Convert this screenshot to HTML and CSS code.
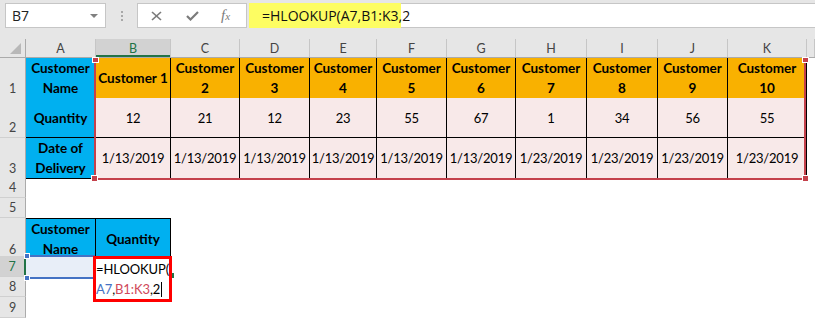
FILE: index.html
```html
<!DOCTYPE html>
<html lang="en">
<head>
  <meta charset="UTF-8" />
  <title>HLOOKUP example</title>
  <link rel="stylesheet" href="styles.css">
</head>
<body>
  <div class="toolbar">
    <div class="namebox"><span>B7</span><span class="caret"></span></div>
    <div class="grip"><i></i></div>
    <div class="fxbox">
      <svg class="ico-x" width="11" height="10" viewBox="0 0 11 10">
        <line x1="1" y1="1" x2="10" y2="9" />
        <line x1="10" y1="1" x2="1" y2="9" />
      </svg>
      <svg class="ico-ok" width="13" height="10" viewBox="0 0 13 10">
        <polyline points="1,5 4.5,8.5 12,1" />
      </svg>
      <span class="ico-fx">f<small>x</small></span>
    </div>
    <div class="formula"><span class="hl">=HLOOKUP(A7,B1:K3,2</span></div>
  </div>

  <div class="sheet">
    <div class="row hdr">
      <div class="corner"><i class="tri"></i></div>
      <div class="col">A</div>
      <div class="col on">B</div>
      <div class="col">C</div>
      <div class="col">D</div>
      <div class="col">E</div>
      <div class="col">F</div>
      <div class="col">G</div>
      <div class="col">H</div>
      <div class="col">I</div>
      <div class="col">J</div>
      <div class="col">K</div>
      <div class="col"></div>
    </div>

    <div class="row h40">
      <div class="rh">1</div>
      <div class="c b blue">Customer<br>Name</div>
      <div class="c b gold">Customer 1</div>
      <div class="c b gold">Customer<br>2</div>
      <div class="c b gold">Customer<br>3</div>
      <div class="c b gold">Customer<br>4</div>
      <div class="c b gold">Customer<br>5</div>
      <div class="c b gold">Customer<br>6</div>
      <div class="c b gold">Customer<br>7</div>
      <div class="c b gold">Customer<br>8</div>
      <div class="c b gold">Customer<br>9</div>
      <div class="c b gold">Customer<br>10</div>
    </div>

    <div class="row h40">
      <div class="rh">2</div>
      <div class="c b blue">Quantity</div>
      <div class="c b pink">12</div>
      <div class="c b pink">21</div>
      <div class="c b pink">12</div>
      <div class="c b pink">23</div>
      <div class="c b pink">55</div>
      <div class="c b pink">67</div>
      <div class="c b pink">1</div>
      <div class="c b pink">34</div>
      <div class="c b pink">56</div>
      <div class="c b pink">55</div>
    </div>

    <div class="row h40">
      <div class="rh">3</div>
      <div class="c b blue">Date of<br>Delivery</div>
      <div class="c b pink">1/13/2019</div>
      <div class="c b pink">1/13/2019</div>
      <div class="c b pink">1/13/2019</div>
      <div class="c b pink">1/13/2019</div>
      <div class="c b pink">1/13/2019</div>
      <div class="c b pink">1/13/2019</div>
      <div class="c b pink">1/23/2019</div>
      <div class="c b pink">1/23/2019</div>
      <div class="c b pink">1/23/2019</div>
      <div class="c b pink">1/23/2019</div>
    </div>

    <div class="row h20"><div class="rh">4</div></div>
    <div class="row h20"><div class="rh">5</div></div>

    <div class="row h38">
      <div class="rh">6</div>
      <div class="c b bt blue">Customer<br>Name</div>
      <div class="c b bt blue">Quantity</div>
    </div>

    <div class="row h21">
      <div class="rh on">7</div>
      <div class="c a7"></div>
    </div>
    <div class="row h20"><div class="rh">8</div></div>
    <div class="row h21"><div class="rh">9</div></div>

    <!-- reference highlight for B1:K3 -->
    <div class="ref-red"></div>
    <span class="hd red tl"></span>
    <span class="hd red tr"></span>
    <span class="hd red bl"></span>
    <span class="hd red br"></span>

    <!-- reference highlight for A7 -->
    <div class="ref-blue"></div>
    <span class="hd blu bt1"></span>
    <span class="hd blu bb1"></span>

    <!-- in-cell editor on B7 -->
    <span class="active-mark"></span>
    <div class="editor">=HLOOKUP(<br><span class="t-blue">A7</span>,<span class="t-red">B1:K3</span>,2<span class="cursor"></span></div>
  </div>
</body>
</html>
```

FILE: styles.css
```css
* {
  margin: 0;
  padding: 0;
  box-sizing: border-box;
}
body {
  width: 815px;
  height: 318px;
  overflow: hidden;
  background: #fff;
  font-family: "Lato", "Open Sans", sans-serif;
  color: #000;
}

/* Formula bar */
.toolbar {
  height: 39px;
  background: #e6e6e6;
  display: flex;
  align-items: flex-start;
  padding: 3px 0 0 5px;
}
.namebox {
  width: 101px;
  height: 25px;
  background: #fff;
  border: 1px solid #c6c6c6;
  display: flex;
  align-items: center;
  justify-content: space-between;
  padding: 0 7px 0 6px;
  font: 14px "Open Sans", sans-serif;
  color: #222;
}
.caret {
  border-left: 4px solid transparent;
  border-right: 4px solid transparent;
  border-top: 4px solid #808080;
}
.grip {
  width: 31px;
  display: flex;
  justify-content: center;
  padding-top: 8px;
}
.grip i {
  display: block;
  width: 2px;
  height: 10px;
  background: repeating-linear-gradient(#a8a8a8 0 2px, transparent 2px 4px);
}
.fxbox {
  width: 110px;
  height: 25px;
  background: #fff;
  border: 1px solid #c6c6c6;
  display: flex;
  align-items: center;
  padding-left: 13px;
  margin-right: 2px;
}
.fxbox svg {
  fill: none;
  stroke: #7b7b7b;
}
.ico-x {
  stroke-width: 1.6;
}
.ico-ok {
  margin-left: 24px;
  stroke-width: 2.2;
}
.ico-fx {
  margin-left: 22px;
  font: italic 15px "Liberation Serif", serif;
  color: #7b7b7b;
  line-height: 1;
}
.ico-fx small {
  font-size: 11px;
}
.formula {
  flex: 1;
  height: 25px;
  display: flex;
  background: #fff;
  border: 1px solid #c6c6c6;
  border-left: 0;
  border-right: 0;
}
.formula .hl {
  width: 152px;
  height: 25px;
  margin: -1px 0;
  display: flex;
  align-items: center;
  padding-left: 13px;
  background: #fdfd62;
  font: 14px "Open Sans", sans-serif;
  color: #111;
  white-space: nowrap;
}

/* Grid */
.sheet {
  position: relative;
}
.row {
  display: grid;
  grid-template-columns: 26px 70px 75px 69px 70px 67px 70px 69px 71px 71px 70px 79px 1fr;
}
.h40 { height: 40px; }
.h38 { height: 38px; }
.h21 { height: 21px; }
.h20 { height: 20px; }

.hdr {
  height: 19px;
  background: #e6e6e6;
  border-bottom: 1px solid #ababab;
}
.corner {
  border-right: 1px solid #ababab;
  display: flex;
  align-items: flex-end;
  justify-content: flex-end;
  padding: 0 4px 3px 0;
}
.tri {
  width: 0;
  height: 0;
  border-left: 11px solid transparent;
  border-bottom: 11px solid #b8b8b8;
}
.col {
  display: flex;
  align-items: center;
  justify-content: center;
  border-right: 1px solid #c6c6c6;
  font-size: 12.5px;
  color: #444;
}
.col.on {
  background: #d2d2d2;
  color: #217346;
  box-shadow: inset 0 -2px #217346;
}
.rh {
  background: #e6e6e6;
  border-right: 1px solid #ababab;
  border-bottom: 1px solid #d0d0d0;
  display: flex;
  align-items: flex-end;
  justify-content: center;
  padding-bottom: 1px;
  font-size: 12.5px;
  line-height: 16px;
  color: #444;
}
.rh.on {
  background: #d2d2d2;
  color: #217346;
  border-right: 2px solid #217346;
}

/* Cells */
.c {
  display: flex;
  align-items: center;
  justify-content: center;
  text-align: center;
  font-size: 13.5px;
  line-height: 20px;
  white-space: nowrap;
}
.b {
  border-right: 1px solid #000;
  border-bottom: 1px solid #000;
}
.bt {
  border-top: 1px solid #000;
}
.blue {
  background: #00b0f0;
  font-weight: 700;
}
.gold {
  background: #f9b100;
  font-weight: 700;
}
.pink {
  background: #f8e9e9;
  font-size: 13px;
  letter-spacing: -0.2px;
}
.a7 {
  background: #e8eef8;
}

/* Reference highlights */
.ref-red {
  position: absolute;
  left: 94px;
  top: 19px;
  width: 712px;
  height: 122px;
  border: 2px solid #c4414b;
  border-top: 0;
}
.ref-blue {
  position: absolute;
  left: 27px;
  top: 216px;
  width: 68px;
  height: 24px;
  border-top: 2px solid #4472c4;
  border-bottom: 2px solid #4472c4;
}
.hd {
  position: absolute;
  width: 5px;
  height: 5px;
  box-shadow: 0 0 0 1px #fff;
}
.hd.red { background: #c4414b; }
.hd.blu { background: #4472c4; width: 4px; height: 4px; }
.tl { left: 93px; top: 19px; height: 4px; }
.tr { left: 803px; top: 19px; height: 4px; }
.bl { left: 92px; top: 137px; }
.br { left: 803px; top: 137px; }
.bt1 { left: 25px; top: 215px; }
.bb1 { left: 25px; top: 237px; }

/* In-cell editor */
.editor {
  position: absolute;
  left: 93px;
  top: 217px;
  width: 79px;
  height: 46px;
  border: 3px solid #f00;
  background: #fff;
  font-size: 13px;
  letter-spacing: -0.1px;
  line-height: 20px;
  white-space: nowrap;
}
.t-blue { color: #4472c4; }
.t-red { color: #d0485a; }
.cursor {
  display: inline-block;
  width: 1px;
  height: 15px;
  background: #000;
  margin-left: 1px;
  vertical-align: -3px;
}
.active-mark {
  position: absolute;
  left: 172px;
  top: 234px;
  width: 2px;
  height: 5px;
  background: #217346;
}
```
